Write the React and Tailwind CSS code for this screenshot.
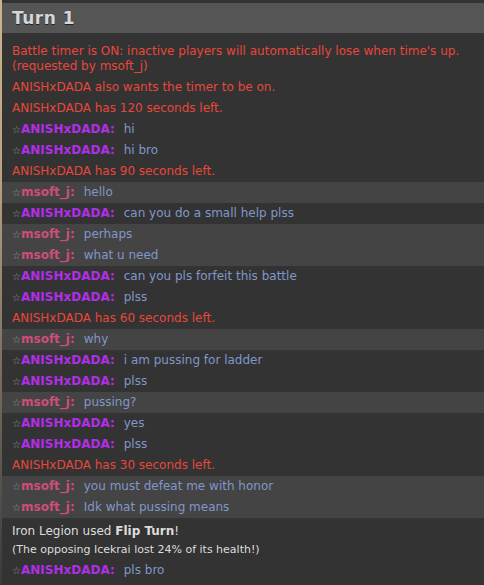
import React from "react";

const RED = "text-[#e8473b]";

const rows = [
  { t: "timer", text: "ANISHxDADA has 120 seconds left." },
  { t: "a", text: "hi" },
  { t: "a", text: "hi bro" },
  { t: "timer", text: "ANISHxDADA has 90 seconds left." },
  { t: "m", text: "hello" },
  { t: "a", text: "can you do a small help plss" },
  { t: "m", text: "perhaps" },
  { t: "m", text: "what u need" },
  { t: "a", text: "can you pls forfeit this battle" },
  { t: "a", text: "plss" },
  { t: "timer", text: "ANISHxDADA has 60 seconds left." },
  { t: "m", text: "why" },
  { t: "a", text: "i am pussing for ladder" },
  { t: "a", text: "plss" },
  { t: "m", text: "pussing?" },
  { t: "a", text: "yes" },
  { t: "a", text: "plss" },
  { t: "timer", text: "ANISHxDADA has 30 seconds left." },
  { t: "m", text: "you must defeat me with honor" },
  { t: "m", text: "Idk what pussing means" },
];

function Chat({ who, text }) {
  const isM = who === "m";
  return (
    <div className={`h-[21px] flex items-center pl-[10px] whitespace-nowrap ${isM ? "bg-[#444]" : ""}`}>
      <span className="text-[10px] text-[#999] w-[9px]">☆</span>
      <span className={`font-bold ${isM ? "text-[#cf4d7d]" : "text-[#b22ee8]"}`}>
        {isM ? "msoft_j:" : "ANISHxDADA:"}
      </span>
      <span className="ml-[9px] text-[#8097c9]">{text}</span>
    </div>
  );
}

export default function App() {
  return (
    <div
      className="relative flex min-h-[585px] bg-[#333] text-[12px] leading-[15px]"
      style={{ fontFamily: 'Verdana, "DejaVu Sans", sans-serif' }}
    >
      <div className="w-[2px] shrink-0 bg-gradient-to-b from-[#cdb48e] via-[#b9a283] via-30% to-[#3a3a3a]" />
      <div className="flex-1 min-w-0">
        <div className="h-[3px]" />
        <div className="h-[30px] bg-[#555] flex items-center pl-[10px]">
          <h2 className="text-[17px] tracking-[0.5px] font-bold text-[#d4d6dc] [text-shadow:0_1px_0_#222]">Turn 1</h2>
        </div>
        <div className="mt-[8px] pl-[10px] py-[3px] text-[#e8473b]">
          <div>Battle timer is ON: inactive players will automatically lose when time's up.</div>
          <div>(requested by msoft_j)</div>
        </div>
        <div className={`h-[21px] flex items-center pl-[10px] ${RED}`}>
          ANISHxDADA also wants the timer to be on.
        </div>
        {rows.map((r, i) =>
          r.t === "timer" ? (
            <div key={i} className={`h-[21px] flex items-center pl-[10px] ${RED}`}>
              {r.text}
            </div>
          ) : (
            <Chat key={i} who={r.t} text={r.text} />
          )
        )}
        <div className="pt-[6px] pl-[10px] text-[#ddd]">
          <div>
            Iron Legion used <b>Flip Turn</b>!
          </div>
          <div className="text-[11px] leading-[20px] mt-[1px]">
            (The opposing Icekrai lost 24% of its health!)
          </div>
        </div>
        <Chat who="a" text="pls bro" />
      </div>
    </div>
  );
}
